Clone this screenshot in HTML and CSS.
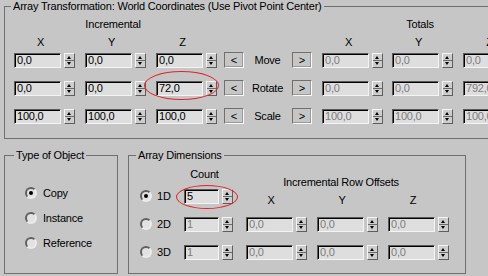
FILE: index.html
```html
<!DOCTYPE html>
<html lang="en">
<head>
  <meta charset="UTF-8">
  <title>Array</title>
  <link rel="stylesheet" href="styles.css">
</head>
<body>
  <div class="dialog">
    <fieldset class="group transform-group">
      <legend>Array Transformation: World Coordinates (Use Pivot Point Center)</legend>
      <div class="transform">
        <div class="head head-inc">Incremental</div>
        <div class="head head-tot">Totals</div>

        <div class="axis">X</div>
        <div class="axis">Y</div>
        <div class="axis">Z</div>
        <div class="axis col7">X</div>
        <div class="axis">Y</div>
        <div class="axis">Z</div>

        <div class="field"><span class="box">0,0</span><span class="spin"><i class="up"></i><i class="down"></i></span></div>
        <div class="field"><span class="box">0,0</span><span class="spin"><i class="up"></i><i class="down"></i></span></div>
        <div class="field"><span class="box">0,0</span><span class="spin"><i class="up"></i><i class="down"></i></span></div>
        <button class="arrow" type="button">&lt;</button>
        <div class="row-label">Move</div>
        <button class="arrow" type="button">&gt;</button>
        <div class="field"><span class="box off">0,0</span><span class="spin"><i class="up"></i><i class="down"></i></span></div>
        <div class="field"><span class="box off">0,0</span><span class="spin"><i class="up"></i><i class="down"></i></span></div>
        <div class="field"><span class="box off">0,0</span><span class="spin"><i class="up"></i><i class="down"></i></span></div>

        <div class="field"><span class="box">0,0</span><span class="spin"><i class="up"></i><i class="down"></i></span></div>
        <div class="field"><span class="box">0,0</span><span class="spin"><i class="up"></i><i class="down"></i></span></div>
        <div class="field"><span class="box">72,0</span><span class="spin"><i class="up"></i><i class="down"></i></span></div>
        <button class="arrow" type="button">&lt;</button>
        <div class="row-label">Rotate</div>
        <button class="arrow" type="button">&gt;</button>
        <div class="field"><span class="box off">0,0</span><span class="spin"><i class="up"></i><i class="down"></i></span></div>
        <div class="field"><span class="box off">0,0</span><span class="spin"><i class="up"></i><i class="down"></i></span></div>
        <div class="field"><span class="box off">792,0</span><span class="spin"><i class="up"></i><i class="down"></i></span></div>

        <div class="field"><span class="box">100,0</span><span class="spin"><i class="up"></i><i class="down"></i></span></div>
        <div class="field"><span class="box">100,0</span><span class="spin"><i class="up"></i><i class="down"></i></span></div>
        <div class="field"><span class="box">100,0</span><span class="spin"><i class="up"></i><i class="down"></i></span></div>
        <button class="arrow" type="button">&lt;</button>
        <div class="row-label">Scale</div>
        <button class="arrow" type="button">&gt;</button>
        <div class="field"><span class="box off">100,0</span><span class="spin"><i class="up"></i><i class="down"></i></span></div>
        <div class="field"><span class="box off">100,0</span><span class="spin"><i class="up"></i><i class="down"></i></span></div>
        <div class="field"><span class="box off">100,0</span><span class="spin"><i class="up"></i><i class="down"></i></span></div>
      </div>
    </fieldset>

    <div class="bottom">
      <fieldset class="group type-group">
        <legend>Type of Object</legend>
        <div class="radio-list">
          <label class="option"><span class="radio checked"></span>Copy</label>
          <label class="option"><span class="radio"></span>Instance</label>
          <label class="option"><span class="radio"></span>Reference</label>
        </div>
      </fieldset>

      <fieldset class="group dims-group">
        <legend>Array Dimensions</legend>
        <div class="dims">
          <div class="dims-left">
            <div class="count-label">Count</div>
            <div class="dim-row first">
              <span class="radio checked"></span><span class="dim-name">1D</span>
              <div class="field small"><span class="box">5</span><span class="spin"><i class="up"></i><i class="down"></i></span></div>
            </div>
            <div class="dim-row">
              <span class="radio"></span><span class="dim-name">2D</span>
              <div class="field small"><span class="box off">1</span><span class="spin"><i class="up"></i><i class="down"></i></span></div>
            </div>
            <div class="dim-row">
              <span class="radio"></span><span class="dim-name">3D</span>
              <div class="field small"><span class="box off">1</span><span class="spin"><i class="up"></i><i class="down"></i></span></div>
            </div>
          </div>

          <div class="offsets">
            <div class="offsets-title">Incremental Row Offsets</div>
            <div class="offsets-axes">
              <span>X</span><span>Y</span><span>Z</span>
            </div>
            <div class="offset-row first">
              <div class="field"><span class="box off">0,0</span><span class="spin"><i class="up"></i><i class="down"></i></span></div>
              <div class="field"><span class="box off">0,0</span><span class="spin"><i class="up"></i><i class="down"></i></span></div>
              <div class="field"><span class="box off">0,0</span><span class="spin"><i class="up"></i><i class="down"></i></span></div>
            </div>
            <div class="offset-row">
              <div class="field"><span class="box off">0,0</span><span class="spin"><i class="up"></i><i class="down"></i></span></div>
              <div class="field"><span class="box off">0,0</span><span class="spin"><i class="up"></i><i class="down"></i></span></div>
              <div class="field"><span class="box off">0,0</span><span class="spin"><i class="up"></i><i class="down"></i></span></div>
            </div>
          </div>
        </div>
      </fieldset>
    </div>
  </div>

  <!-- red hand-drawn highlight marks -->
  <div class="mark mark-rotate"></div>
  <div class="mark mark-count"></div>
</body>
</html>
```

FILE: styles.css
```css
* {
  margin: 0;
  padding: 0;
  box-sizing: border-box;
}

body {
  font-family: "Liberation Sans", Arial, sans-serif;
  font-size: 11px;
  line-height: 13px;
  letter-spacing: -0.2px;
  color: #000;
  background: #c6c6c6;
  width: 488px;
  height: 276px;
  overflow: hidden;
  position: relative;
}

.dialog {
  width: 600px;
}

/* group boxes */
.group {
  border: 1px solid #707070;
}

.group legend {
  padding: 0 2px;
  line-height: 13px;
}

.transform-group {
  margin-left: 4px;
  padding: 5px 0 14px 9px;
}

.transform-group legend {
  margin-left: -3px;
}

.transform {
  display: grid;
  grid-template-columns: 71px 71px 68px 19px 49px 30px 70px 71px 71px;
  grid-template-rows: 18px 16px 28px 28px 16px;
  align-items: start;
}

.head {
  text-align: center;
  justify-self: start;
}

.head-inc {
  grid-column: 1 / 4;
  width: 198px;
}

.head-tot {
  grid-column: 7 / 10;
  width: 196px;
}

.axis {
  width: 53px;
  text-align: center;
  justify-self: start;
}

.col7 {
  grid-column: 7;
}

.row-label {
  text-align: center;
  padding-top: 2px;
}

/* spinner field */
.field {
  display: flex;
  gap: 3px;
  margin-top: 1px;
}

.box {
  display: block;
  width: 47px;
  height: 15px;
  padding-left: 2px;
  background: #dedede;
  border: 1px solid;
  border-color: #5a5a5a #f4f4f4 #f4f4f4 #5a5a5a;
  box-shadow: inset 1px 1px 0 #000;
  white-space: nowrap;
  overflow: hidden;
}

.box.off {
  color: #7c7c7c;
}

.spin {
  display: flex;
  flex-direction: column;
  width: 11px;
  height: 15px;
  background: #cdcdcd;
  border: 1px solid;
  border-color: #f4f4f4 #5e5e5e #5e5e5e #f4f4f4;
}

.spin i {
  flex: 1;
  position: relative;
}

.spin .up {
  border-bottom: 1px solid #6a6a6a;
}

.spin i::after {
  content: "";
  position: absolute;
  left: 2px;
  top: 2px;
  border-left: 2.5px solid transparent;
  border-right: 2.5px solid transparent;
}

.spin .up::after {
  border-bottom: 3px solid #000;
}

.spin .down::after {
  top: 1px;
  border-top: 3px solid #000;
}

.arrow {
  width: 20px;
  height: 16px;
  font: inherit;
  line-height: 12px;
  color: #000;
  background: #c6c6c6;
  border: 1px solid;
  border-color: #707070 #fafafa #fafafa #707070;
  box-shadow: inset -1px -1px 0 #9a9a9a;
}

/* bottom row of groups */
.bottom {
  display: flex;
  margin-top: 10px;
  margin-left: 4px;
  gap: 10px;
}

.type-group {
  width: 114px;
  padding: 23px 0 0 20px;
}

.type-group legend {
  margin-left: -11px;
}

.radio-list {
  display: flex;
  flex-direction: column;
  gap: 9px;
}

.option {
  display: flex;
  align-items: center;
  gap: 6px;
  height: 16px;
}

.radio {
  display: block;
  position: relative;
  width: 12px;
  height: 12px;
  flex: none;
  border-radius: 50%;
  background: #e2e2e2;
  border: 2px solid;
  border-color: #606060 #ececec #ececec #606060;
}

.radio.checked::after {
  content: "";
  position: absolute;
  left: 2px;
  top: 2px;
  width: 4px;
  height: 4px;
  border-radius: 50%;
  background: #000;
}

.dims-group {
  width: 338px;
  padding: 6px 0 13px 11px;
}

.dims-group legend {
  margin-left: -4px;
}

.dims {
  display: flex;
  gap: 13px;
}

.count-label {
  margin-left: 44px;
  width: 41px;
  text-align: center;
}

.dim-row {
  display: flex;
  align-items: center;
  height: 16px;
  margin-top: 12px;
}

.dim-row.first {
  margin-top: 7px;
}

.dim-name {
  width: 32px;
  padding-left: 5px;
}

.field.small {
  margin-top: 0;
}

.field.small .box {
  width: 35px;
}

.offsets {
  padding-top: 8px;
}

.offsets-title {
  width: 190px;
  text-align: center;
}

.offsets-axes {
  display: flex;
  gap: 21px;
  margin-top: 5px;
}

.offsets-axes span {
  width: 50px;
  text-align: center;
}

.offset-row {
  display: flex;
  gap: 10px;
  height: 16px;
  margin-top: 12px;
}

.offset-row.first {
  margin-top: 9px;
}

.offset-row .field {
  margin-top: 1px;
}

/* annotation marks */
.mark {
  position: absolute;
  border: 1px solid #e4222c;
  border-radius: 50%;
}

.mark-rotate {
  left: 144px;
  top: 71px;
  width: 75px;
  height: 29px;
}

.mark-count {
  left: 176px;
  top: 185px;
  width: 62px;
  height: 24px;
}
```
